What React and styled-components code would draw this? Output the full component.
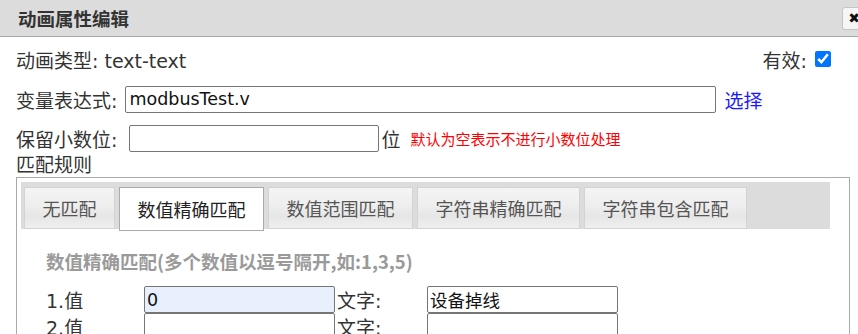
import React from "react";
import styled, { createGlobalStyle } from "styled-components";

const tabs = ["无匹配", "数值精确匹配", "数值范围匹配", "字符串精确匹配", "字符串包含匹配"];

const rows = [
  { no: 1, value: "0", text: "设备掉线", filled: true },
  { no: 2, value: "", text: "", filled: false },
];

const App = () => {
  return (
    <>
      <GlobalStyle />
      <Dialog>
        <TitleBar>
          <Title>动画属性编辑</Title>
          <CloseButton>✖</CloseButton>
        </TitleBar>
        <Content>
          <Row $mt={5}>
            <Label>动画类型: text-text</Label>
            <Valid>
              <Label>有效:</Label>
              <Check type="checkbox" defaultChecked />
            </Valid>
          </Row>
          <Row $mt={6}>
            <Label>变量表达式:</Label>
            <TextInput $w={591} $ml={8} defaultValue="modbusTest.v" />
            <Link>选择</Link>
          </Row>
          <Row $mt={5}>
            <Label>保留小数位:</Label>
            <TextInput $w={250} $ml={12} />
            <Label $ml={2}>位</Label>
            <Hint>默认为空表示不进行小数位处理</Hint>
          </Row>
          <Caption>匹配规则</Caption>
          <RuleBox>
            <TabWidget>
              <TabBar>
                {tabs.map((t, i) => (
                  <Tab key={t} $active={i === 1}>
                    {t}
                  </Tab>
                ))}
              </TabBar>
              <Panel>
                <PanelHeading>数值精确匹配(多个数值以逗号隔开,如:1,3,5)</PanelHeading>
                <ValueTable>
                  <tbody>
                    {rows.map((r) => (
                      <tr key={r.no}>
                        <NoCell>{r.no}.值</NoCell>
                        <InputCell>
                          <CellInput $filled={r.filled} defaultValue={r.value} />
                        </InputCell>
                        <TextCell>文字:</TextCell>
                        <InputCell>
                          <CellInput defaultValue={r.text} />
                        </InputCell>
                      </tr>
                    ))}
                  </tbody>
                </ValueTable>
              </Panel>
            </TabWidget>
          </RuleBox>
        </Content>
      </Dialog>
    </>
  );
};

export default App;

const GlobalStyle = createGlobalStyle`
  html, body {
    margin: 0;
    padding: 0;
    overflow: hidden;
    background: #fff;
  }
  body {
    font-family: "DejaVu Sans", "Noto Sans CJK SC", sans-serif;
    color: #333;
  }
`;

const Dialog = styled.div`
  width: 858px;
  height: 334px;
  overflow: hidden;
  background: #fff;
`;

const TitleBar = styled.div`
  display: flex;
  align-items: center;
  height: 36px;
  padding-left: 18px;
  background: #dcdcdc;
  border-bottom: 1px solid #a8a8a8;
`;

const Title = styled.div`
  font-family: "Noto Sans CJK SC", sans-serif;
  font-size: 18.5px;
  font-weight: bold;
  color: #333;
`;

const CloseButton = styled.div`
  margin-left: auto;
  margin-right: -8px;
  width: 24px;
  height: 23px;
  box-sizing: border-box;
  display: flex;
  align-items: center;
  justify-content: center;
  border: 1px solid #c5c5c5;
  border-radius: 3px;
  background: #f6f6f6;
  font-size: 14px;
  color: #111;
`;

const Content = styled.div`
  padding: 0 8px 0 16px;
`;

const Row = styled.div`
  display: flex;
  align-items: center;
  height: 34px;
  margin-top: ${(p) => p.$mt || 0}px;
`;

const Label = styled.span`
  font-size: 19px;
  color: #333;
  white-space: nowrap;
  margin-left: ${(p) => p.$ml || 0}px;
`;

const Valid = styled.div`
  margin-left: auto;
  margin-right: 19px;
  display: flex;
  align-items: center;
  gap: 8px;
`;

const Check = styled.input`
  width: 16px;
  height: 16px;
  margin: 0;
  accent-color: #0075ff;
`;

const TextInput = styled.input`
  box-sizing: border-box;
  width: ${(p) => p.$w}px;
  height: 27px;
  margin-left: ${(p) => p.$ml || 0}px;
  padding: 0 3px;
  border: 1px solid #767676;
  border-radius: 2px;
  font-family: "DejaVu Sans", "Noto Sans CJK SC", sans-serif;
  font-size: 17.5px;
  color: #111;
  outline: none;
`;

const Link = styled.span`
  margin-left: 8px;
  font-size: 19px;
  color: #1a1aff;
`;

const Hint = styled.span`
  margin-left: 10px;
  font-family: "Noto Sans CJK SC", sans-serif;
  font-size: 15px;
  color: #ff0000;
`;

const Caption = styled.div`
  height: 20px;
  line-height: 20px;
  font-size: 19px;
  color: #333;
`;

const RuleBox = styled.div`
  margin-top: 2px;
  width: 834px;
  box-sizing: border-box;
  height: 200px;
  padding: 4px;
  border: 1px solid #aaa;
`;

const TabWidget = styled.div`
  width: 809px;
`;

const TabBar = styled.div`
  display: flex;
  gap: 4px;
  height: 47px;
  box-sizing: border-box;
  padding: 5px 0 0 3px;
  background: #dcdcdc;
`;

const Tab = styled.div`
  box-sizing: border-box;
  height: ${(p) => (p.$active ? 44 : 42)}px;
  padding: 0 17.5px;
  display: flex;
  align-items: center;
  font-family: "Noto Sans CJK SC", sans-serif;
  font-size: 18px;
  color: ${(p) => (p.$active ? "#222" : "#555")};
  border: 1px solid ${(p) => (p.$active ? "#aaa" : "#d3d3d3")};
  background: ${(p) =>
    p.$active
      ? "#fff"
      : "linear-gradient(#f4f4f4 0%, #eeeeee 45%, #e6e6e6 70%, #efefef 100%)"};
  position: relative;
  z-index: ${(p) => (p.$active ? 1 : 0)};
`;

const Panel = styled.div`
  padding: 20px 0 0 25px;
`;

const PanelHeading = styled.div`
  height: 24px;
  line-height: 24px;
  font-family: "Noto Sans CJK SC", sans-serif;
  font-size: 18.5px;
  font-weight: bold;
  color: #9a9a9a;
`;

const ValueTable = styled.table`
  margin-top: 13px;
  border-collapse: collapse;
  border-spacing: 0;
`;

const NoCell = styled.td`
  width: 98px;
  height: 27px;
  padding: 0;
  font-size: 19px;
  color: #333;
`;

const TextCell = styled.td`
  width: 90px;
  padding: 0 0 0 2px;
  font-size: 19px;
  color: #333;
`;

const InputCell = styled.td`
  padding: 0;
  height: 27px;
`;

const CellInput = styled.input`
  display: block;
  box-sizing: border-box;
  width: 191px;
  height: 27px;
  margin: 0;
  padding: 0 2px;
  border: 1px solid #767676;
  border-radius: 2px;
  background: ${(p) => (p.$filled ? "#e8f0fe" : "#fff")};
  font-family: "DejaVu Sans", "Noto Sans CJK SC", sans-serif;
  font-size: 17.5px;
  color: #111;
  outline: none;
`;
